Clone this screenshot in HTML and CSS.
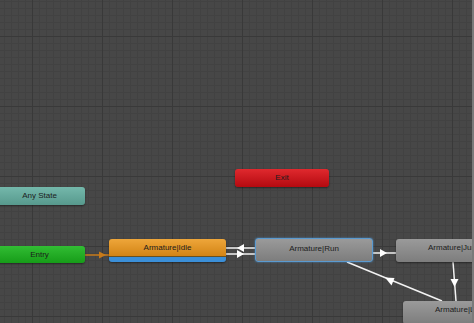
FILE: index.html
```html
<!DOCTYPE html>
<html lang="en">
<head>
  <meta charset="UTF-8">
  <title>Animator</title>
  <link rel="stylesheet" href="styles.css">
</head>
<body>
  <div class="graph">
    <svg class="edges" width="474" height="323" viewBox="0 0 474 323">
      <!-- Entry -> Idle -->
      <line x1="85" y1="255" x2="110" y2="255" stroke="#c77a1a" stroke-width="1.5"/>
      <polygon points="106,255 99,251.5 99,258.5" fill="#c77a1a"/>
      <!-- Idle <-> Run -->
      <line x1="226" y1="248" x2="256" y2="248" stroke="#f2f2f2" stroke-width="1.5"/>
      <line x1="226" y1="254" x2="256" y2="254" stroke="#f2f2f2" stroke-width="1.5"/>
      <polygon points="237,248 244,244 244,252" fill="#fff"/>
      <polygon points="244,254 237,250 237,258" fill="#fff"/>
      <!-- Run -> Jump -->
      <line x1="373" y1="253" x2="396" y2="253" stroke="#f2f2f2" stroke-width="1.5"/>
      <polygon points="387,253 380,249 380,257" fill="#fff"/>
      <!-- Jump -> Land -->
      <line x1="453" y1="262" x2="456" y2="301" stroke="#f2f2f2" stroke-width="1.5"/>
      <polygon points="454.5,287 450.5,279 458.5,279" fill="#fff"/>
      <!-- Land -> Run -->
      <line x1="442" y1="301" x2="347" y2="262" stroke="#f2f2f2" stroke-width="1.5"/>
      <polygon points="385,277.5 394.5,278 391.5,285.5" fill="#fff"/>
    </svg>

    <div class="node any-state" style="left:-6px;top:187px;width:91px">Any State</div>
    <div class="node entry" style="left:-6px;top:246px;width:91px">Entry</div>
    <div class="node exit" style="left:235px;top:169px;width:94px">Exit</div>
    <div class="node state default" style="left:109px;top:239px;width:117px">Armature|Idle</div>
    <div class="node state selected" style="left:255px;top:238px;width:118px">Armature|Run</div>
    <div class="node state" style="left:396px;top:239px;width:120px">Armature|Jump</div>
    <div class="node state" style="left:403px;top:301px;width:120px">Armature|Land</div>

    <div class="edge-bar"></div>
  </div>
</body>
</html>
```

FILE: styles.css
```css
html, body {
  margin: 0;
  padding: 0;
}
body {
  font-family: 'Liberation Sans', Arial, sans-serif;
  background-color: #474747;
  overflow: hidden;
}
.graph {
  position: relative;
  width: 474px;
  height: 323px;
  overflow: hidden;
  background-color: #474747;
  background-image:
    linear-gradient(90deg, #393939 1px, transparent 1px),
    linear-gradient(#393939 1px, transparent 1px),
    linear-gradient(90deg, #424242 1px, transparent 1px),
    linear-gradient(#424242 1px, transparent 1px);
  background-size: 70px 70px, 70px 70px, 7px 7px, 7px 7px;
  background-position: 32px 36px, 32px 36px, 32px 36px, 32px 36px;
}
.edges {
  position: absolute;
  left: 0;
  top: 0;
}
.node {
  position: absolute;
  height: 17px;
  box-sizing: border-box;
  border-radius: 3px;
  font-size: 8px;
  line-height: 17px;
  text-align: center;
  color: #1c1c1c;
  white-space: nowrap;
  box-shadow: 0 1px 2px rgba(0, 0, 0, 0.45);
}
.any-state {
  height: 18px;
  line-height: 18px;
  background: linear-gradient(#74b8ab, #57998d);
}
.entry {
  background: linear-gradient(#31bd33, #179c19);
}
.exit {
  height: 18px;
  line-height: 18px;
  background: linear-gradient(#e0292e, #b40a10);
}
.state {
  height: 23px;
  line-height: 17px;
  background: linear-gradient(#9a9a9a, #7d7d7d);
  text-align: left;
  padding-left: 32px;
}
.state.default {
  background: linear-gradient(#eea63a, #d18213);
  text-align: center;
  padding-left: 0;
  border-bottom: 5px solid #3b8fd8;
  box-shadow: 0 1px 2px rgba(0, 0, 0, 0.45), inset 0 -1px 0 #6a5020;
}
.state.selected {
  height: 24px;
  text-align: center;
  padding-left: 0;
  border: 1px solid #5a9ad0;
  box-shadow: 0 0 2px #4f8fc4;
  line-height: 19px;
}
.edge-bar {
  position: absolute;
  right: 0;
  top: 0;
  width: 2px;
  height: 323px;
  background-color: #7a7a7a;
}
```
